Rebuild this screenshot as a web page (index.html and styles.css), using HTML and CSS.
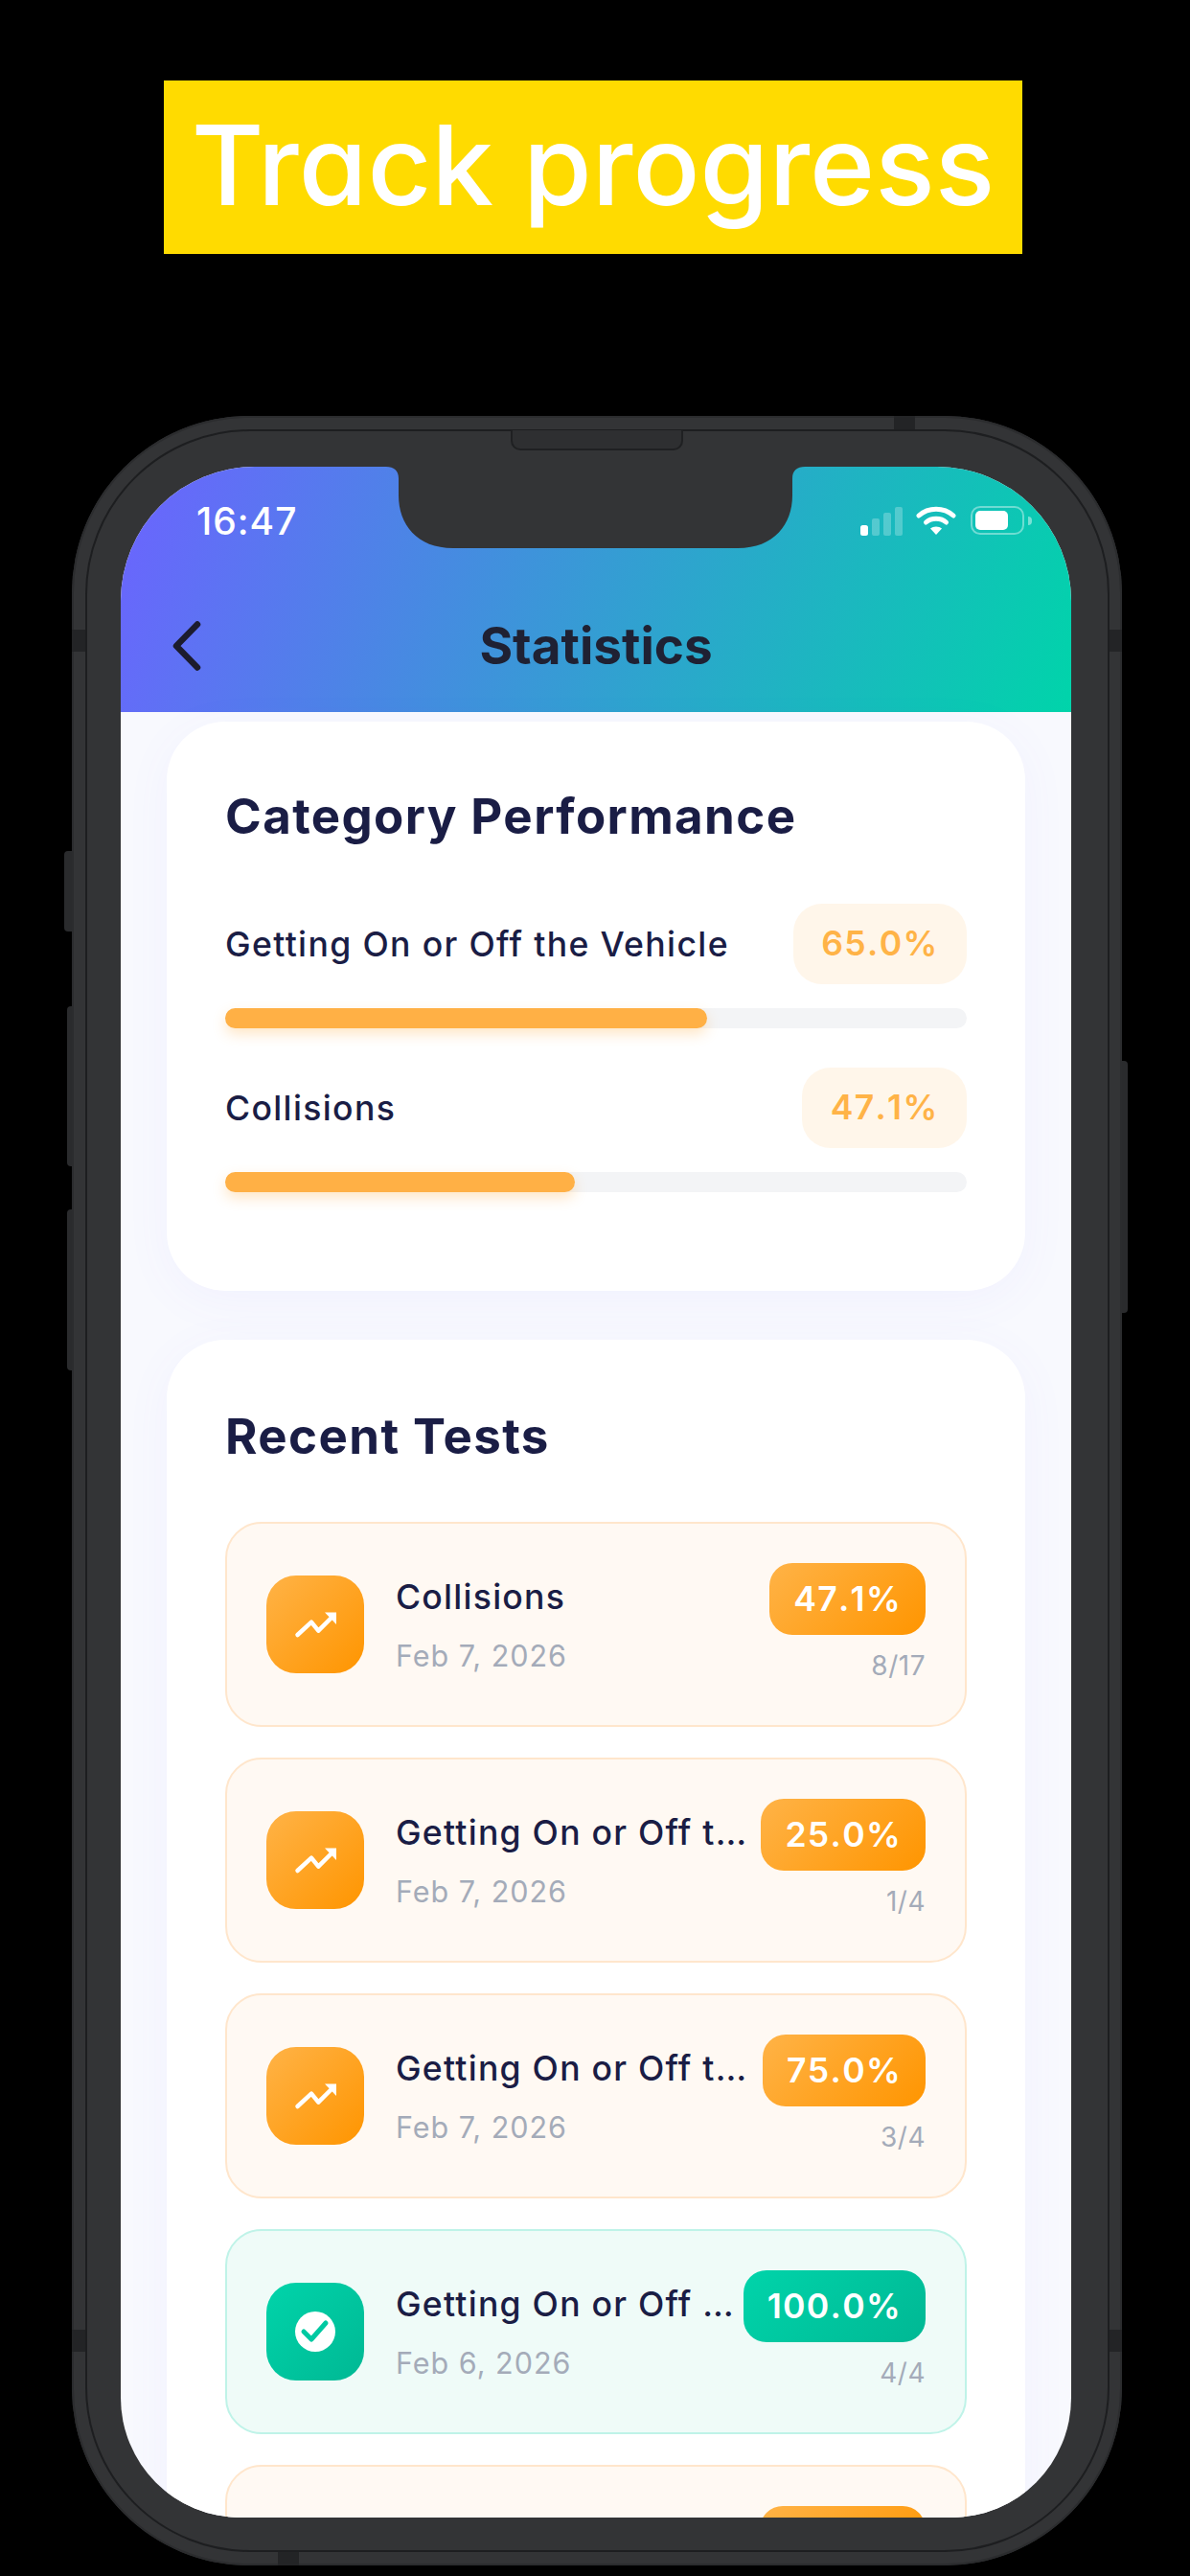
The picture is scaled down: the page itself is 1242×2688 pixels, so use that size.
FILE: index.html
```html
<!DOCTYPE html>
<html lang="en">
<head>
<meta charset="utf-8">
<title>Track progress</title>
<link rel="stylesheet" href="styles.css">
</head>
<body>
<div class="banner"><span class="banner-text">Track progress</span></div>
<div class="phone">
  <span class="btn btn-silent"></span>
  <span class="btn btn-up"></span>
  <span class="btn btn-down"></span>
  <span class="btn btn-power"></span>
  <span class="band band-l1"></span>
  <span class="band band-r1"></span>
  <span class="band band-l2"></span>
  <span class="band band-r2"></span>
  <span class="band-h band-top"></span>
  <span class="band-h band-bottom"></span>
  <span class="ring"></span>
  <span class="speaker"></span>
  <div class="screen">
    <header class="header">
      <div class="status">
        <span class="time">16:47</span>
        <div class="status-icons">
          <svg class="signal" width="44" height="30" viewBox="0 0 44 30"><rect x="0" y="19" width="8" height="11" rx="2.5" fill="#fff"/><rect x="12" y="12" width="8" height="18" rx="2" fill="#fff" opacity=".25"/><rect x="24" y="6" width="8" height="24" rx="2" fill="#fff" opacity=".25"/><rect x="36" y="0" width="8" height="30" rx="2" fill="#fff" opacity=".25"/></svg>
          <svg class="wifi" width="42" height="31" viewBox="0 0 42 31"><path d="M3 11 C13 2 29 2 39 11" fill="none" stroke="#fff" stroke-width="5" stroke-linecap="round"/><path d="M10.500 18 C16 13 26 13 31.500 18" fill="none" stroke="#fff" stroke-width="5" stroke-linecap="round"/><path d="M15 24.500 C18 21.800 24 21.800 27 24.500 L21 31Z" fill="#fff"/></svg>
          <div class="battery"><span class="battery-fill"></span></div>
          <span class="battery-nub"></span>
        </div>
      </div>
      <div class="nav">
        <svg class="back" width="36" height="56" viewBox="0 0 36 56"><path d="M27 5.500 L5 28 L27 50.500" fill="none" stroke="#1c1c2e" stroke-width="6.500" stroke-linecap="round" stroke-linejoin="round"/></svg>
        <h1 class="nav-title">Statistics</h1>
      </div>
    </header>
    <main class="content">
      <section class="card card-perf">
        <h2 class="card-title">Category Performance</h2>
        <div class="cat">
          <div class="cat-head"><span class="cat-name">Getting On or Off the Vehicle</span><span class="cat-pct">65.0%</span></div>
          <div class="track"><div class="fill" style="width:65%"></div></div>
        </div>
        <div class="cat">
          <div class="cat-head"><span class="cat-name">Collisions</span><span class="cat-pct">47.1%</span></div>
          <div class="track"><div class="fill" style="width:47.1%"></div></div>
        </div>
      </section>
      <section class="card card-recent">
        <h2 class="card-title recent-title">Recent Tests</h2>
        <div class="tests">
          <article class="test">
            <div class="test-icon"><svg width="102" height="102" viewBox="0 0 102 102"><path d="M32.500 62 L47 48.700 L54.300 57.700 L70 42" fill="none" stroke="#fff" stroke-width="4.500" stroke-linecap="round" stroke-linejoin="round"/><path d="M61 38.500 L73 38.500 L73 51Z" fill="#fff"/></svg></div>
            <div class="test-info"><div class="test-name">Collisions</div><div class="test-date">Feb 7, 2026</div></div>
            <div class="test-score"><span class="score-pill">47.1%</span><span class="score-count">8/17</span></div>
          </article>
          <article class="test">
            <div class="test-icon"><svg width="102" height="102" viewBox="0 0 102 102"><path d="M32.500 62 L47 48.700 L54.300 57.700 L70 42" fill="none" stroke="#fff" stroke-width="4.500" stroke-linecap="round" stroke-linejoin="round"/><path d="M61 38.500 L73 38.500 L73 51Z" fill="#fff"/></svg></div>
            <div class="test-info"><div class="test-name">Getting On or Off the Vehicle</div><div class="test-date">Feb 7, 2026</div></div>
            <div class="test-score"><span class="score-pill">25.0%</span><span class="score-count">1/4</span></div>
          </article>
          <article class="test">
            <div class="test-icon"><svg width="102" height="102" viewBox="0 0 102 102"><path d="M32.500 62 L47 48.700 L54.300 57.700 L70 42" fill="none" stroke="#fff" stroke-width="4.500" stroke-linecap="round" stroke-linejoin="round"/><path d="M61 38.500 L73 38.500 L73 51Z" fill="#fff"/></svg></div>
            <div class="test-info"><div class="test-name">Getting On or Off the Vehicle</div><div class="test-date">Feb 7, 2026</div></div>
            <div class="test-score"><span class="score-pill">75.0%</span><span class="score-count">3/4</span></div>
          </article>
          <article class="test test-pass">
            <div class="test-icon"><svg width="102" height="102" viewBox="0 0 102 102"><circle cx="51" cy="51" r="21" fill="#fff"/><path d="M39 51 L47 59 L62 42" fill="none" stroke="#00c9a2" stroke-width="5" stroke-linecap="round" stroke-linejoin="round"/></svg></div>
            <div class="test-info"><div class="test-name">Getting On or Off the Vehicle</div><div class="test-date">Feb 6, 2026</div></div>
            <div class="test-score"><span class="score-pill">100.0%</span><span class="score-count">4/4</span></div>
          </article>
          <article class="test">
            <div class="test-icon"></div>
            <div class="test-info"><div class="test-name">Getting On or Off the Vehicle</div><div class="test-date">Feb 6, 2026</div></div>
            <div class="test-score"><span class="score-pill">50.0%</span><span class="score-count">2/4</span></div>
          </article>
        </div>
      </section>
    </main>
  </div>
  <svg class="notch" width="437" height="85" viewBox="0 0 437 85"><path d="M0 0 C8 0 13 4 13 12 L13 30 C13 60 32 85 70 85 L367 85 C405 85 424 60 424 30 L424 12 C424 4 429 0 437 0Z" fill="#333436"/></svg>
</div>
</body>
</html>
```
FILE: styles.css
```css
* { box-sizing: border-box; }
html, body { margin: 0; padding: 0; }
body {
  width: 1242px;
  height: 2688px;
  overflow: hidden;
  background: #000;
  font-family: Inter, "Liberation Sans", sans-serif;
}
.banner {
  width: 896px;
  height: 181px;
  margin: 84px 0 0 171px;
  padding-bottom: 5px;
  background: #ffdb00;
  display: flex;
  align-items: center;
  justify-content: center;
}
.banner-text {
  color: #fff;
  font-size: 116px;
  font-weight: 500;
  line-height: 1;
  font-feature-settings: "cv11" 1;
  letter-spacing: 0;
}
.phone {
  position: relative;
  width: 1096px;
  height: 2243px;
  margin: 169px 0 0 75px;
  padding: 53px 53px 50px 51px;
  background: #333436;
  border-radius: 185px;
  box-shadow: inset 0 0 0 2px #2b2c2e;
}
.ring {
  position: absolute;
  inset: 14px 13px 14px 14px;
  border: 2px solid #1d1e20;
  border-radius: 172px;
  pointer-events: none;
}
.speaker {
  position: absolute;
  left: 458px;
  top: 15px;
  width: 180px;
  height: 21px;
  background: #2e2f31;
  border: 2px solid #1f2022;
  border-top: 0;
  border-radius: 0 0 10px 10px;
}
.btn {
  position: absolute;
  background: #2a2b2d;
  border-radius: 4px 0 0 4px;
}
.btn-silent { left: -8px; top: 454px; width: 8px; height: 84px; }
.btn-up { left: -5px; top: 616px; width: 5px; height: 167px; }
.btn-down { left: -5px; top: 828px; width: 5px; height: 168px; }
.btn-power { right: -6px; top: 673px; width: 6px; height: 263px; border-radius: 0 4px 4px 0; }
.band { position: absolute; width: 15px; height: 23px; background: #232426; }
.band-l1 { left: 0; top: 223px; }
.band-r1 { right: 0; top: 223px; width: 14px; }
.band-l2 { left: 0; top: 1997px; }
.band-r2 { right: 0; top: 1997px; width: 14px; }
.band-h { position: absolute; width: 22px; height: 15px; background: #232426; }
.band-top { left: 858px; top: 0; }
.band-bottom { left: 215px; bottom: 0; }
.notch { position: absolute; left: 328px; top: 53px; }
.screen {
  position: relative;
  width: 992px;
  height: 2140px;
  overflow: hidden;
  border-radius: 140px 140px 125px 125px;
  background: #f8f9fe;
}
.header {
  height: 256px;
  background: linear-gradient(110deg, #6c63ff, #00d4aa);
  display: flex;
  flex-direction: column;
}
.status {
  height: 116px;
  padding: 32px 41px 0 79px;
  display: flex;
  justify-content: space-between;
  align-items: flex-start;
}
.time {
  color: #fff;
  font-size: 39px;
  font-weight: 500;
  line-height: 50px;
  letter-spacing: 1px;
}
.status-icons {
  display: flex;
  align-items: flex-start;
  padding-top: 8px;
}
.signal { margin-top: 2px; }
.wifi { margin-left: 14px; }
.battery {
  width: 56px;
  height: 30px;
  margin: 1px 0 0 15px;
  padding: 3px;
  border: 2px solid rgba(255, 255, 255, .4);
  border-radius: 10px;
}
.battery-fill {
  display: block;
  width: 34px;
  height: 20px;
  background: #fff;
  border-radius: 5px;
}
.battery-nub {
  width: 4px;
  height: 9px;
  margin: 12px 0 0 4px;
  background: rgba(255, 255, 255, .45);
  border-radius: 0 4px 4px 0;
}
.nav {
  position: relative;
  display: flex;
  justify-content: center;
  align-items: center;
  height: 62px;
  margin-top: 40px;
}
.back { position: absolute; left: 53px; top: 3px; }
.nav-title {
  margin: 0;
  color: #1f2133;
  font-size: 53px;
  font-weight: 700;
  line-height: 62px;
}
.content {
  padding: 10px 48px 0;
  display: flex;
  flex-direction: column;
  gap: 51px;
}
.card {
  background: #fff;
  border-radius: 61px;
  padding: 61px;
  box-shadow: 0 10px 50px rgba(108, 99, 255, .05);
}
.card-perf { height: 594px; }
.card-title {
  margin: 7px 0 60px;
  color: #1a1d45;
  font-size: 51px;
  font-weight: 700;
  line-height: 62px;
  letter-spacing: 1.400px;
}
.recent-title { margin: 9px 0 58px; }
.cat { margin-bottom: 41px; }
.cat-head {
  display: flex;
  justify-content: space-between;
  align-items: center;
  margin-bottom: 25px;
}
.cat-name {
  color: #1a1d45;
  font-size: 35.600px;
  font-weight: 500;
  letter-spacing: 1.350px;
}
.cat-pct {
  height: 84px;
  padding: 0 29.500px;
  background: #fff6ea;
  border-radius: 30px;
  color: #ffb347;
  font-size: 35.600px;
  font-weight: 600;
  line-height: 84px;
  letter-spacing: 1.300px;
  font-kerning: none;
}
.track {
  height: 21px;
  background: #f3f4f6;
  border-radius: 11px;
}
.fill {
  height: 100%;
  background: #ffb045;
  border-radius: 11px;
  box-shadow: 0 6px 14px rgba(255, 173, 66, .3);
}
.tests {
  display: flex;
  flex-direction: column;
  gap: 32px;
}
.test {
  height: 214px;
  padding: 41px 41px;
  display: flex;
  align-items: flex-start;
  background: #fff9f3;
  border: 2.500px solid #ffe6cc;
  border-radius: 38px;
}
.test-icon {
  flex: none;
  width: 102px;
  height: 102px;
  margin-top: 13px;
  background: linear-gradient(135deg, #ffb347, #ff9500);
  border-radius: 31px;
}
.test-icon svg { display: block; }
.test-info {
  flex: 1;
  min-width: 0;
  margin: 0 6px 0 33px;
}
.test-name {
  margin-top: 14px;
  color: #1a1d45;
  font-size: 35.600px;
  font-weight: 500;
  line-height: 44px;
  letter-spacing: 1.250px;
  white-space: nowrap;
  overflow: hidden;
  text-overflow: ellipsis;
}
.test-date {
  margin-top: 19px;
  color: #a4abb9;
  font-size: 30.500px;
  line-height: 40px;
  letter-spacing: 1px;
}
.test-score {
  flex: none;
  display: flex;
  flex-direction: column;
  align-items: flex-end;
}
.score-pill {
  height: 75px;
  padding: 0 25px;
  background: linear-gradient(135deg, #ffb347, #ff9500);
  border-radius: 24px;
  color: #fff;
  font-size: 35.600px;
  font-weight: 600;
  line-height: 75px;
  letter-spacing: 1.300px;
  font-kerning: none;
}
.score-count {
  margin-top: 14px;
  color: #a4abb9;
  font-size: 28px;
  line-height: 36px;
  letter-spacing: .5px;
}
.test-pass {
  background: #effbf8;
  border-color: #bff3e8;
}
.test-pass .test-icon,
.test-pass .score-pill {
  background: linear-gradient(135deg, #00d4aa, #00b894);
}
```
